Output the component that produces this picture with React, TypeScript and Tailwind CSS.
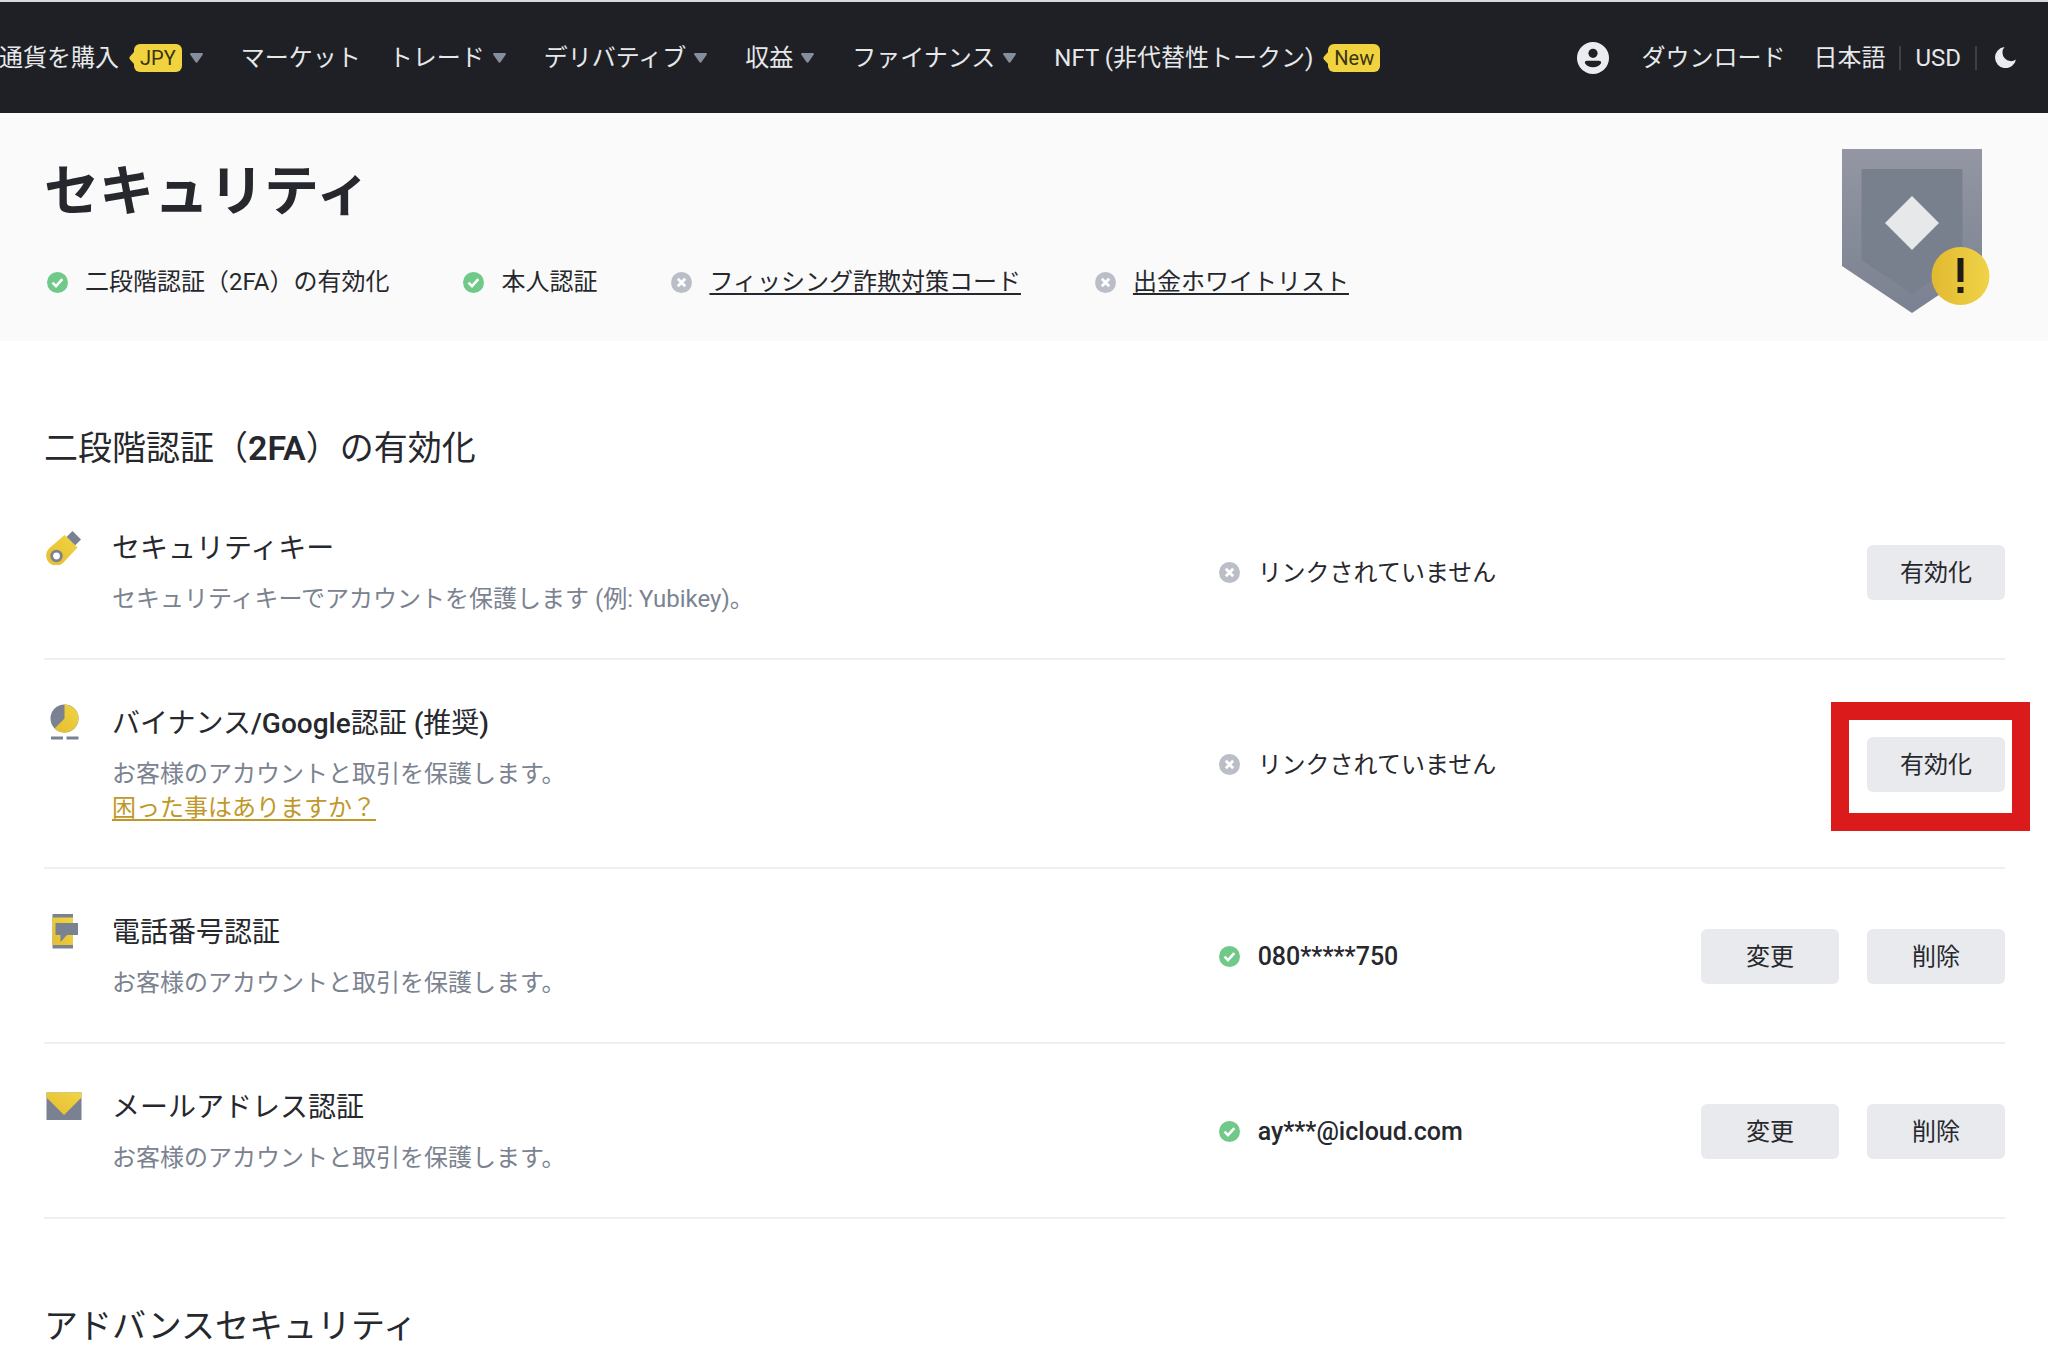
import type { ReactNode } from 'react';

function Check() {
  return (
    <svg className="size-[21px] shrink-0" viewBox="0 0 21 21" aria-hidden="true">
      <circle cx="10.5" cy="10.5" r="10.5" fill="#70c989" />
      <path d="M5.5 10.7 9 14.2 15.3 7.2" fill="none" stroke="#fff" strokeWidth="2.6" />
    </svg>
  );
}

function Cross() {
  return (
    <svg className="size-[21px] shrink-0" viewBox="0 0 21 21" aria-hidden="true">
      <circle cx="10.5" cy="10.5" r="10.5" fill="#b9bec7" />
      <path d="M6.8 6.8 14.2 14.2M14.2 6.8 6.8 14.2" fill="none" stroke="#fff" strokeWidth="2.8" />
    </svg>
  );
}

function Caret() {
  return (
    <svg className="mr-[10px] ml-2 h-[10px] w-[13px] shrink-0" viewBox="0 0 13 10" aria-hidden="true">
      <path d="M1.2 0h10.6q1.4 0.2 1 1.6L7.6 9q-1.1 1.4-2.2 0L0.2 1.6Q-0.2 0.2 1.2 0Z" fill="#848e9c" />
    </svg>
  );
}

function Badge({ children }: { children: ReactNode }) {
  return (
    <span className="ml-[10px] flex items-center">
      <svg className="h-3 w-[5px]" viewBox="0 0 5 12" aria-hidden="true">
        <path d="M5 0 1 4.6Q-0.2 6 1 7.4L5 12Z" fill="#f0d33f" />
      </svg>
      <span className="flex h-7 items-center rounded-md bg-[#f0d33f] px-1.5 text-[20px] leading-7 text-[#3b3411]">
        {children}
      </span>
    </span>
  );
}

function NavItem({ label, badge, caret = true }: { label: string; badge?: string; caret?: boolean }) {
  return (
    <a href="#" className="flex items-center whitespace-nowrap">
      {label}
      {badge && <Badge>{badge}</Badge>}
      {caret && <Caret />}
    </a>
  );
}

function Header() {
  return (
    <header className="flex h-[113px] items-center justify-between border-t-2 border-[#d5dae1] bg-[#1f2025] pr-8 text-[24px] leading-9 text-[#e6e8ea]">
      <nav className="-ml-px flex items-center gap-7">
        <NavItem label="通貨を購入" badge="JPY" />
        <NavItem label="マーケット" caret={false} />
        <NavItem label="トレード" />
        <NavItem label="デリバティブ" />
        <NavItem label="収益" />
        <NavItem label="ファイナンス" />
        <NavItem label="NFT (非代替性トークン)" badge="New" caret={false} />
      </nav>
      <div className="flex items-center">
        <button type="button" aria-label="アカウント" className="mr-8">
          <svg className="size-8" viewBox="0 0 32 32" aria-hidden="true">
            <circle cx="16" cy="16" r="16" fill="#eaecef" />
            <circle cx="16" cy="11.3" r="4.6" fill="#1f2025" />
            <path
              d="M10 18.8h12q2.4 0 2.2 2.1-2.9 4.3-8.2 4.3t-8.2-4.3q-0.2-2.1 2.2-2.1Z"
              fill="#1f2025"
            />
          </svg>
        </button>
        <a href="#" className="mr-7">ダウンロード</a>
        <button type="button">日本語</button>
        <span className="mx-[14px] h-6 w-0.5 bg-[#3c4048]" />
        <button type="button">USD</button>
        <span className="mr-[18px] ml-[14px] h-6 w-0.5 bg-[#3c4048]" />
        <button type="button" aria-label="ダークモード">
          <svg className="size-[21px]" viewBox="0 0 21 21" aria-hidden="true">
            <path d="M9.5 0A10.6 10.6 0 1 0 21 12.6 8.6 8.6 0 0 1 9.5 0Z" fill="#eaecef" />
          </svg>
        </button>
      </div>
    </header>
  );
}

function Shield() {
  return (
    <svg className="h-[164px] w-[148px] shrink-0" viewBox="0 0 148 164" aria-hidden="true">
      <defs>
        <linearGradient id="shield" x1="0" y1="0" x2="0" y2="1">
          <stop offset="0" stopColor="#9497a3" />
          <stop offset="1" stopColor="#7a8190" />
        </linearGradient>
        <linearGradient id="alert" x1="0" y1="0" x2="1" y2="0">
          <stop offset="0" stopColor="#e2b930" />
          <stop offset="1" stopColor="#efd348" />
        </linearGradient>
      </defs>
      <path d="M0 0H140V117L70 164 0 117Z" fill="url(#shield)" />
      <path d="M19.500 20H120.500V111L70 145 19.500 111Z" fill="#79808d" />
      <path d="M70 47 97 74 70 101 43 74Z" fill="#e6e8ea" />
      <circle cx="118.500" cy="127" r="29" fill="url(#alert)" />
      <path d="M115.500 109h6v24h-6ZM115.500 138h6v6h-6Z" fill="#1e1c14" />
    </svg>
  );
}

function KeyIcon() {
  return (
    <svg className="size-9" viewBox="0 0 36 36" aria-hidden="true">
      <path d="M26.500 2 35 10.500 29 16.500 20.500 8Z" fill="#7a8190" />
      <path d="M18.500 6 31.500 18.500 17.500 33.500A10 10 0 1 1 3 19.500Z" fill="url(#gold)" />
      <circle cx="10.500" cy="27" r="4.800" fill="#fff" stroke="#7a8190" strokeWidth="2.800" />
    </svg>
  );
}

function PieIcon() {
  return (
    <svg className="size-9" viewBox="0 0 36 36" aria-hidden="true">
      <circle cx="18.500" cy="14.500" r="14" fill="#7a8190" />
      <path d="M18.500 0.500A14 14 0 1 1 8.600 24.400L18.500 14.500Z" fill="url(#gold)" />
      <path d="M5 32.500h12v3H5ZM20.500 32.500h12v3h-12Z" fill="#7a8190" />
    </svg>
  );
}

function PhoneIcon() {
  return (
    <svg className="size-9" viewBox="0 0 36 36" aria-hidden="true">
      <path d="M6.500 1h20.500v34.500H6.500Z" fill="#7a8190" />
      <path d="M6.500 4.500h20.500V32H6.500Z" fill="url(#gold)" />
      <path d="M9.500 10h22.500v12H21l-6.500 7v-7h-5Z" fill="#7a8190" />
    </svg>
  );
}

function MailIcon() {
  return (
    <svg className="size-9" viewBox="0 0 36 36" aria-hidden="true">
      <path d="M0.500 4.500H35.500V32H0.500Z" fill="#7a8190" />
      <path d="M0.500 4.500H35.500V9.500L18 27 0.500 9.500Z" fill="url(#gold)" />
    </svg>
  );
}

function ActionButton({ children }: { children: ReactNode }) {
  return (
    <button
      type="button"
      className="h-[55px] w-[138px] rounded-md bg-[#e9eaed] text-[24px] leading-9 text-[#26282d]"
    >
      {children}
    </button>
  );
}

interface RowProps {
  icon: ReactNode;
  title: ReactNode;
  description: string;
  help?: string;
  linked?: boolean;
  status: string;
  actions: string[];
  highlighted?: boolean;
}

function Row({ icon, title, description, help, linked, status, actions, highlighted }: RowProps) {
  return (
    <li className="flex items-center border-b-2 border-[#efeff0] pt-11 pb-[42px]">
      <div className="flex w-[59.9%] items-start">
        <div className="w-[68px] shrink-0 pl-0.5">{icon}</div>
        <div className="pt-0.5">
          <h3 className="text-[28px] leading-9">{title}</h3>
          <p className="mt-[15px] text-[24px] leading-[34px] text-[#7b8290]">{description}</p>
          {help && (
            <a
              href="#"
              className="block w-fit text-[24px] leading-[34px] text-[#bf982a] underline decoration-2 underline-offset-3"
            >
              {help}
            </a>
          )}
        </div>
      </div>
      <div className="flex items-center gap-[18px] leading-9">
        {linked ? <Check /> : <Cross />}
        <span className={linked ? 'text-[25px] font-medium' : 'text-[24px]'}>{status}</span>
      </div>
      <div className="relative ml-auto flex gap-7">
        {actions.map((action) => (
          <ActionButton key={action}>{action}</ActionButton>
        ))}
        {highlighted && (
          <div className="pointer-events-none absolute -top-[35px] -right-[25px] -bottom-[39px] -left-9 border-[18px] border-[#db1a1c]" />
        )}
      </div>
    </li>
  );
}

function SectionTitle({ children }: { children: ReactNode }) {
  return <h2 className="pt-[83px] pb-[13px] text-[34px] leading-[48px]">{children}</h2>;
}

export default function App() {
  return (
    <div className="overflow-x-hidden bg-white font-['Roboto','Noto_Sans_CJK_JP',sans-serif] text-[#26282d]">
      <svg className="absolute size-0" aria-hidden="true">
        <defs>
          <linearGradient id="gold" x1="0" y1="1" x2="1" y2="0">
            <stop offset="0" stopColor="#e6bd30" />
            <stop offset="1" stopColor="#efd543" />
          </linearGradient>
        </defs>
      </svg>
      <Header />
      <div className="flex justify-between bg-[#fafafa] pr-[58px] pl-11">
        <div className="pt-[46px] pb-[41px]">
          <h1 className="text-[55px] leading-[64px] font-bold">セキュリティ</h1>
          <ul className="mt-[41px] flex gap-[74px] pl-[3px] text-[24px] leading-9">
            <li className="flex items-center gap-[17px]">
              <Check />
              二段階認証（2FA）の有効化
            </li>
            <li className="flex items-center gap-[17px]">
              <Check />
              本人認証
            </li>
            <li className="flex items-center gap-[17px]">
              <Cross />
              <a href="#" className="underline decoration-2 underline-offset-3">フィッシング詐欺対策コード</a>
            </li>
            <li className="flex items-center gap-[17px]">
              <Cross />
              <a href="#" className="underline decoration-2 underline-offset-3">出金ホワイトリスト</a>
            </li>
          </ul>
        </div>
        <div className="pt-9">
          <Shield />
        </div>
      </div>
      <main className="pr-[43px] pl-11">
        <SectionTitle>
          二段階認証（<span className="font-semibold">2FA</span>）の有効化
        </SectionTitle>
        <ul>
          <Row
            icon={<KeyIcon />}
            title="セキュリティキー"
            description="セキュリティキーでアカウントを保護します (例: Yubikey)。"
            status="リンクされていません"
            actions={['有効化']}
          />
          <Row
            icon={<PieIcon />}
            title={
              <>
                バイナンス<span className="font-medium">/Google</span>認証 <span className="font-medium">(</span>推奨
                <span className="font-medium">)</span>
              </>
            }
            description="お客様のアカウントと取引を保護します。"
            help="困った事はありますか？"
            status="リンクされていません"
            actions={['有効化']}
            highlighted
          />
          <Row
            icon={<PhoneIcon />}
            title="電話番号認証"
            description="お客様のアカウントと取引を保護します。"
            linked
            status="080*****750"
            actions={['変更', '削除']}
          />
          <Row
            icon={<MailIcon />}
            title="メールアドレス認証"
            description="お客様のアカウントと取引を保護します。"
            linked
            status="ay***@icloud.com"
            actions={['変更', '削除']}
          />
        </ul>
        <SectionTitle>アドバンスセキュリティ</SectionTitle>
      </main>
    </div>
  );
}
